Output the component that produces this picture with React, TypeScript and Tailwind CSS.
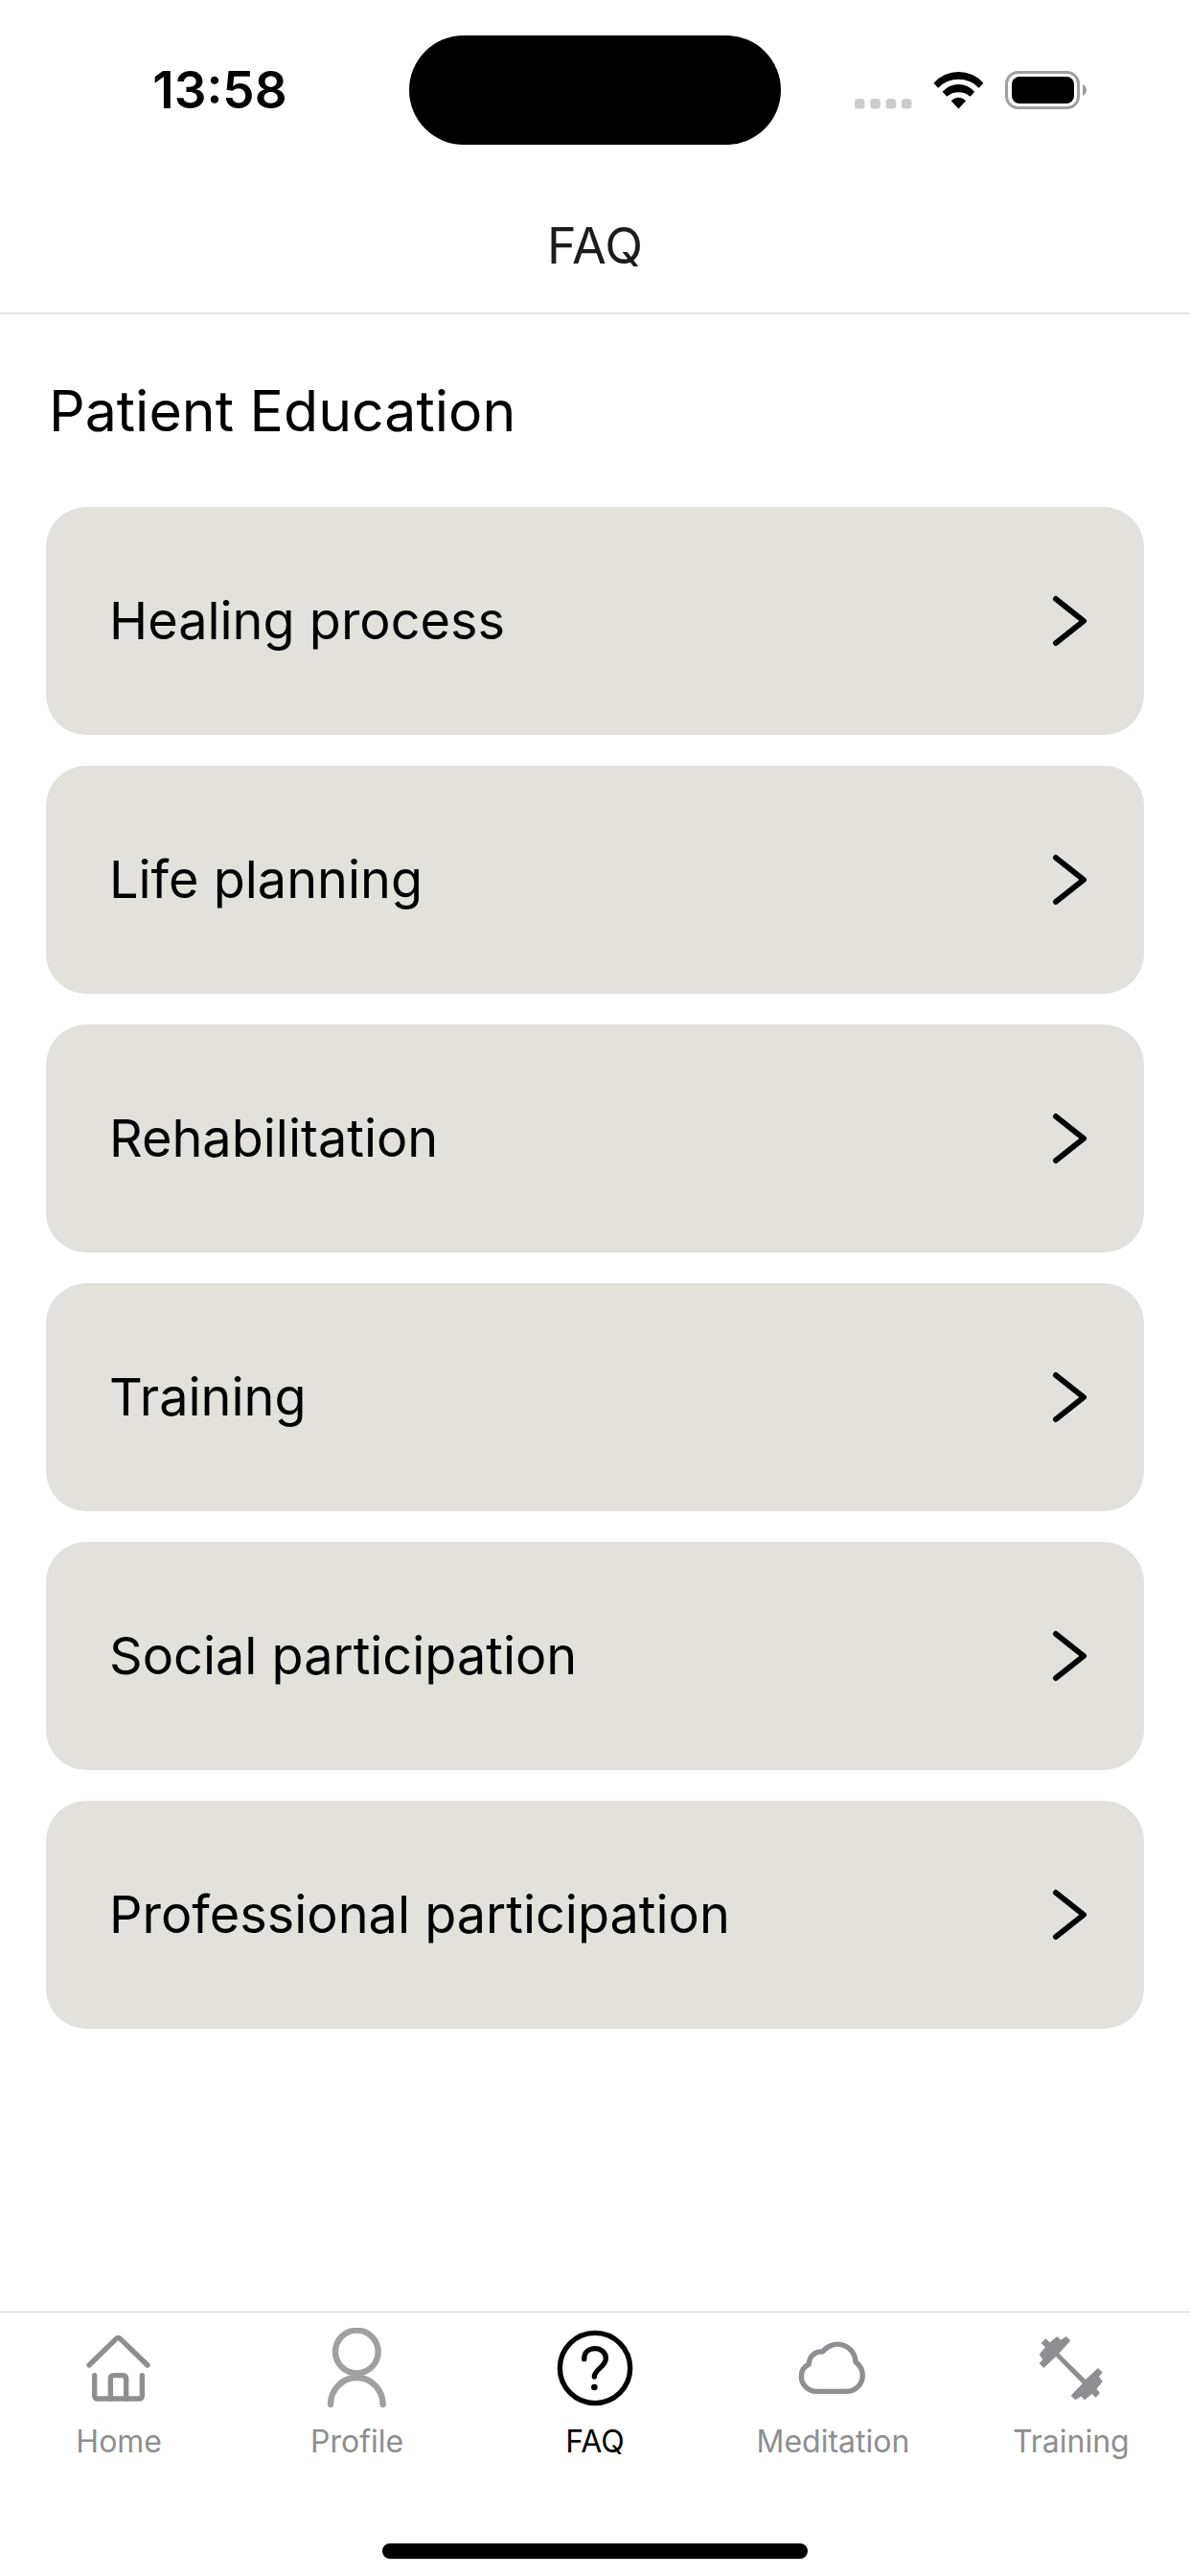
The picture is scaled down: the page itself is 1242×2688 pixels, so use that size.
import { useState } from 'react';
import type { ReactNode } from 'react';

const topics = [
  'Healing process',
  'Life planning',
  'Rehabilitation',
  'Training',
  'Social participation',
  'Professional participation',
];

function Icon({ children }: { children: ReactNode }) {
  return (
    <svg
      viewBox="0 0 252 252"
      className="size-[84px]"
      fill="none"
      stroke="currentColor"
      strokeWidth="16"
      strokeLinecap="round"
      strokeLinejoin="round"
      aria-hidden="true"
    >
      {children}
    </svg>
  );
}

const tabs = [
  {
    name: 'Home',
    icon: (
      <Icon>
        <path d="M33 117 L118 34 Q124 28 130 34 L216 117" />
        <path d="M50 149 V212 Q50 222 60 222 H189 Q199 222 199 212 V149" />
        <path d="M100 222 V160 Q100 149 111 149 H138 Q149 149 149 160 V222" />
      </Icon>
    ),
  },
  {
    name: 'Profile',
    icon: (
      <Icon>
        <g stroke="#a0a0a0" strokeWidth="19">
          <circle cx="124" cy="75" r="67" />
          <path d="M42 240 A82 84 0 0 1 206 240" />
        </g>
      </Icon>
    ),
  },
  {
    name: 'FAQ',
    icon: (
      <Icon>
        <circle cx="126" cy="126" r="110" />
        <path d="M92 98 C92 77 107 65 126 65 C147 65 160 79 160 96 C160 122 124 130 124 153" />
        <circle cx="124" cy="186" r="10" fill="currentColor" stroke="none" />
      </Icon>
    ),
  },
  {
    name: 'Meditation',
    icon: (
      <Icon>
        <path d="M76 199 H168 A51 50 0 0 0 220 149 C220 132 211 117 198 107 A57 57 0 0 0 95 75 C70 73 52 90 52 114 C37 121 28 136 28 153 A48 46 0 0 0 76 199 Z" />
      </Icon>
    ),
  },
  {
    name: 'Training',
    icon: (
      <Icon>
        <path
          d="M32 48 L46 34 L59 46 L82 27 L93 38 L110 27 L124 40 L88 80 L171 162 L210 126 L224 140 L213 152 L224 169 L205 191 L216 204 L203 218 L191 207 L168 226 L157 215 L139 226 L125 212 L161 175 L78 90 L40 126 L26 112 L37 100 L26 83 L45 61 Z"
          fill="currentColor"
          stroke="none"
        />
      </Icon>
    ),
  },
];

function StatusBar() {
  return (
    <div className="grid grid-cols-[1fr_388px_1fr] items-center pt-[37px] pb-9">
      <div className="pl-8 text-center text-[53px] leading-[56px] font-semibold">13:58</div>
      <div className="h-[114px] rounded-full bg-black" />
      <div className="flex items-center justify-center pr-8">
        <svg viewBox="0 0 242 42" className="h-[42px] w-[242px]" aria-hidden="true">
          <g fill="#cccccc">
            <rect x="0" y="30" width="10.500" height="10.500" rx="3.500" />
            <rect x="16.300" y="30" width="10.500" height="10.500" rx="3.500" />
            <rect x="32.700" y="30" width="10.500" height="10.500" rx="3.500" />
            <rect x="49" y="30" width="10.500" height="10.500" rx="3.500" />
          </g>
          <path d="M82.400 13.700 A34.500 34.500 0 0 1 134.400 13.700 L129.600 18.700 A29.500 29.500 0 0 0 87.200 18.700 Z" />
          <path d="M91.600 22.700 A22.200 22.200 0 0 1 125.200 22.700 L120.500 27.700 A19 19 0 0 0 96.300 27.700 Z" />
          <path d="M108.400 40.500 L100.700 32.300 A10 10 0 0 1 116.100 32.300 Z" />
          <rect x="158.500" y="2.500" width="75" height="37" rx="12" fill="none" stroke="#a0a0a0" strokeWidth="3" />
          <rect x="164" y="7" width="65" height="28" rx="8" />
          <path d="M238 15 Q242 17 242 21 Q242 25 238 27 Z" fill="#a0a0a0" />
        </svg>
      </div>
    </div>
  );
}

export default function App() {
  const [active, setActive] = useState('FAQ');

  return (
    <div className="flex min-h-screen flex-col bg-white font-['Inter',sans-serif] text-black">
      <StatusBar />

      <header className="border-b-2 border-[#e8e8e8]">
        <h1 className="text-center text-[52px] leading-[139px] text-[#1c1c1e]">FAQ</h1>
      </header>

      <main className="flex-1 px-12 pt-[65px]">
        <h2 className="px-[3px] text-[59px] leading-[72px]">Patient Education</h2>
        <ul className="mt-16 flex flex-col gap-8">
          {topics.map((topic) => (
            <li key={topic}>
              <button className="flex h-[238px] w-full items-center justify-between rounded-[42px] bg-[#e2e1dc] pr-14 pl-[66px] text-left text-[54px] leading-[56px]">
                {topic}
                <svg
                  viewBox="0 0 42 54"
                  className="h-[54px] w-[42px]"
                  fill="none"
                  stroke="currentColor"
                  strokeWidth="6"
                  strokeLinecap="round"
                  strokeLinejoin="round"
                  aria-hidden="true"
                >
                  <path d="M6 4 L35 27 L6 50" />
                </svg>
              </button>
            </li>
          ))}
        </ul>
      </main>

      <nav className="border-t border-[#d0d0d0] pt-4 pb-[18px]">
        <div className="grid grid-cols-5">
          {tabs.map((tab) => (
            <button
              key={tab.name}
              onClick={() => setActive(tab.name)}
              className={`flex flex-col items-center gap-4 ${active === tab.name ? 'text-black' : 'text-[#8e8e93]'}`}
            >
              {tab.icon}
              <span className="text-[32px] leading-[38px]">{tab.name}</span>
            </button>
          ))}
        </div>
        <div className="mx-auto mt-[87px] h-4 w-[444px] rounded-full bg-black" />
      </nav>
    </div>
  );
}
